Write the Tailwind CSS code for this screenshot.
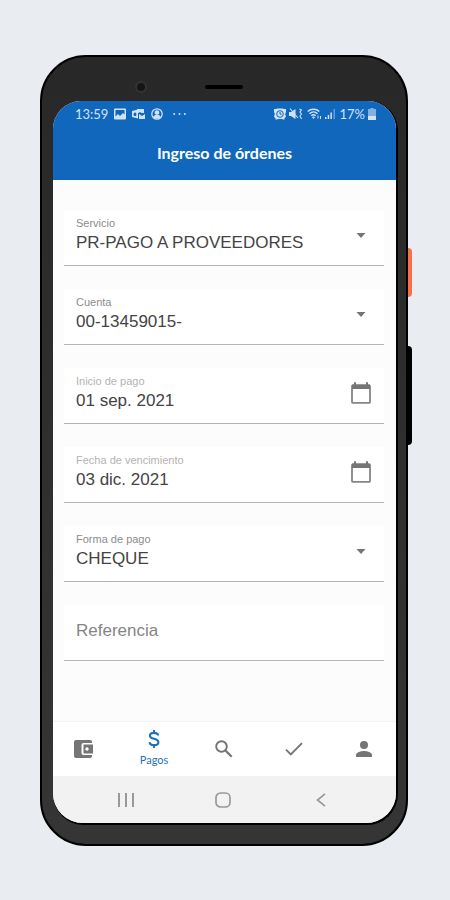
<!DOCTYPE html>
<html lang="es">
<head>
<meta charset="utf-8">
<meta name="viewport" content="width=device-width, initial-scale=1">
<title>Ingreso de órdenes</title>
<script src="https://cdn.jsdelivr.net/npm/@tailwindcss/browser@4"></script>
</head>
<body class="min-h-screen bg-[#e9edf2] pt-[55px] pr-[42px] pb-[54px] pl-10 font-['Liberation_Sans',Arial,sans-serif]">
<div class="relative mx-auto max-w-md rounded-[46px] border-2 border-black bg-linear-to-b from-[#282828] to-[#353535] pr-2.5 pb-[21px] pl-[11px]">
  <!-- side buttons -->
  <span class="absolute top-[191px] -right-1.5 h-[49px] w-1 rounded-r-sm bg-[#fa6f4b]"></span>
  <span class="absolute top-[289px] -right-1.5 h-[99px] w-1 rounded-r-sm bg-black"></span>
  <!-- camera and speaker -->
  <div class="h-11"></div>
  <span class="absolute top-6 left-[93px] size-3 rounded-full border-2 border-[#333] bg-[#151515]"></span>
  <span class="absolute top-7 left-1/2 h-1 w-[38px] -translate-x-1/2 rounded-full bg-black"></span>

  <div class="flex flex-col overflow-hidden rounded-t-[28px] rounded-b-[30px] bg-[#fcfcfc] shadow-[1px_1px_0_1px_#000]">
    <header class="bg-[#1067bc] font-[Lato,sans-serif] text-white">
      <div class="flex h-[26px] items-center justify-between pr-5 pl-[22px] text-[13px] leading-4 text-[#cfe3f6]">
        <div class="flex items-center gap-1.5">
          <span>13:59</span>
          <svg class="h-3 w-3" viewBox="0 0 12 12" fill="currentColor"><path fill-rule="evenodd" d="M1 0.500h10a1 1 0 0 1 1 1v9a1 1 0 0 1-1 1H1a1 1 0 0 1-1-1v-9a1 1 0 0 1 1-1zM1.500 2v6.500L4 6l2 2L9 5l1.500 1.500V2z"/></svg>
          <svg class="h-3 w-[13px]" viewBox="0 0 13 12" fill="currentColor"><path d="M5 1h7v4H9.500L8 4 6.500 5H5z"/><path fill-rule="evenodd" d="M0 3l6-1.500v9L0 9zM3 4.500a1.500 1.800 0 1 0 0.010 0z"/><path d="M7 6l3 2 3-2v5H7z"/></svg>
          <svg class="h-3 w-3" viewBox="0 0 12 12" fill="none" stroke="currentColor" stroke-width="1.300"><circle cx="6" cy="6" r="5.200"/><circle cx="6" cy="4.500" r="1.700" fill="currentColor"/><path fill="currentColor" d="M3 8.800c1-2 5-2 6 0-1.500 1.800-4.500 1.800-6 0z"/></svg>
          <svg class="ml-1 h-3 w-[13px]" viewBox="0 0 13 12" fill="currentColor"><circle cx="1.200" cy="6" r="1"/><circle cx="6.500" cy="6" r="1"/><circle cx="11.800" cy="6" r="1"/></svg>
        </div>
        <div class="flex items-center gap-[3px]">
          <svg class="h-3 w-3" viewBox="0 0 12 12"><path fill="currentColor" d="M0 1h2l1.500-.5h5L10 1h2v3l-.8 2L12 9l-1.500 1v1.500H9L8 11H4l-1 .5H1.500V10L0 9l.8-3L0 4z"/><circle cx="6" cy="6" r="3.300" fill="none" stroke="#1067bc"/><path d="M6 4v2.200h1.600" fill="none" stroke="#1067bc"/></svg>
          <svg class="h-3 w-[13px]" viewBox="0 0 13 12" fill="currentColor"><path d="M0 4h2l4.500-3v10L2 8H0z"/><path d="M1 .5l8 9.500M10.500 1l2 1-1.500 2 1.500 2-1.500 2 1.500 3" fill="none" stroke="currentColor" stroke-width="1.100"/></svg>
          <svg class="ml-0.5 h-3 w-[15px]" viewBox="0 0 15 12" fill="none" stroke="currentColor" stroke-width="1.500"><path d="M.7 3.500c3-3 8.600-3 11.600 0M2.500 5.700c2.300-2.200 5.700-2.200 8 0M4.300 7.800c1.300-1.200 3.100-1.200 4.400 0"/><path d="M5.500 9h2l-1 1.500zM11 7.500v3M13.500 8v3" stroke-width="1"/></svg>
          <svg class="h-3 w-3" viewBox="0 0 12 12" fill="currentColor"><path d="M0 9h1.500v2H0zM2.700 7h1.500v4H2.700zM5.400 4.500h1.500V11H5.400z"/><path opacity=".45" d="M8.500 1H10v10H8.500z"/></svg>
          <span>17%</span>
          <svg class="h-3 w-2" viewBox="0 0 8 12" fill="currentColor"><path opacity=".6" d="M2.500 0h3v1H8v7H0V1h2.500z"/><path d="M0 8h8v4H0z"/></svg>
        </div>
      </div>
      <h1 class="pt-4 pb-[17px] text-center text-base leading-5 font-bold">Ingreso de órdenes</h1>
    </header>

    <form class="flex flex-col gap-[23px] pt-[30px] pr-3 pb-[60px] pl-[11px] text-[#444]">
      <div class="flex h-14 items-center justify-between border-b border-[#b5b5b5] bg-white pr-[18px] pl-3">
        <div class="flex min-w-0 flex-1 flex-col pb-1.5">
          <label for="servicio" class="text-[11px] leading-4 text-[#8c8c8c]">Servicio</label>
          <select id="servicio" class="h-6 w-full appearance-none bg-transparent text-[17px] leading-6 outline-none"><option>PR-PAGO A PROVEEDORES</option></select>
        </div>
        <svg class="pointer-events-none mb-1 h-[5px] w-2.5" viewBox="0 0 10 5" fill="#757575"><path d="M.5 0h9L5 5z"/></svg>
      </div>
      <div class="flex h-14 items-center justify-between border-b border-[#b5b5b5] bg-white pr-[18px] pl-3">
        <div class="flex min-w-0 flex-1 flex-col pb-1.5">
          <label for="cuenta" class="text-[11px] leading-4 text-[#8c8c8c]">Cuenta</label>
          <select id="cuenta" class="h-6 w-full appearance-none bg-transparent text-[17px] leading-6 outline-none"><option>00-13459015-</option></select>
        </div>
        <svg class="pointer-events-none mb-1 h-[5px] w-2.5" viewBox="0 0 10 5" fill="#757575"><path d="M.5 0h9L5 5z"/></svg>
      </div>
      <div class="flex h-14 items-center justify-between border-b border-[#b5b5b5] bg-white pr-[13px] pl-3">
        <div class="flex min-w-0 flex-1 flex-col pb-1.5">
          <label for="inicio" class="text-[11px] leading-4 text-[#b3b3b3]">Inicio de pago</label>
          <input id="inicio" type="text" value="01 sep. 2021" class="h-6 w-full bg-transparent text-[17px] leading-6 outline-none">
        </div>
        <button type="button" aria-label="Elegir inicio de pago" class="mb-1.5"><svg class="h-[22px] w-5" viewBox="0 0 20 22"><path d="M1.800 3.500h16.400a.8.8 0 0 1 .8.800v15.600a1 1 0 0 1-1 1H2a1 1 0 0 1-1-1V4.300a.8.8 0 0 1 .8-.8z" fill="none" stroke="#858585" stroke-width="1.800"/><path d="M1 2.500h2V.3h2v2.200h10V.3h2v2.200h2V7H1z" fill="#757575"/></svg></button>
      </div>
      <div class="flex h-14 items-center justify-between border-b border-[#b5b5b5] bg-white pr-[13px] pl-3">
        <div class="flex min-w-0 flex-1 flex-col pb-1.5">
          <label for="vencimiento" class="text-[11px] leading-4 text-[#b3b3b3]">Fecha de vencimiento</label>
          <input id="vencimiento" type="text" value="03 dic. 2021" class="h-6 w-full bg-transparent text-[17px] leading-6 outline-none">
        </div>
        <button type="button" aria-label="Elegir fecha de vencimiento" class="mb-1.5"><svg class="h-[22px] w-5" viewBox="0 0 20 22"><path d="M1.800 3.500h16.400a.8.8 0 0 1 .8.800v15.600a1 1 0 0 1-1 1H2a1 1 0 0 1-1-1V4.300a.8.8 0 0 1 .8-.8z" fill="none" stroke="#858585" stroke-width="1.800"/><path d="M1 2.500h2V.3h2v2.200h10V.3h2v2.200h2V7H1z" fill="#757575"/></svg></button>
      </div>
      <div class="flex h-14 items-center justify-between border-b border-[#b5b5b5] bg-white pr-[18px] pl-3">
        <div class="flex min-w-0 flex-1 flex-col pb-1.5">
          <label for="forma" class="text-[11px] leading-4 text-[#8c8c8c]">Forma de pago</label>
          <select id="forma" class="h-6 w-full appearance-none bg-transparent text-[17px] leading-6 outline-none"><option>CHEQUE</option></select>
        </div>
        <svg class="pointer-events-none mb-1 h-[5px] w-2.5" viewBox="0 0 10 5" fill="#757575"><path d="M.5 0h9L5 5z"/></svg>
      </div>
      <div class="flex h-14 items-center border-b border-[#b5b5b5] bg-white px-3">
        <input type="text" aria-label="Referencia" placeholder="Referencia" class="w-full bg-transparent pb-1 text-[17px] leading-6 outline-none placeholder:text-[#858585]">
      </div>
    </form>

    <nav class="flex h-[55px] items-center justify-between border-t border-[#f3f3f3] bg-white pr-1 pl-[3px] text-[#757575]">
      <a href="#" aria-label="Cuentas" class="flex w-14 justify-center"><svg class="h-[18px] w-5" viewBox="0 0 20 18"><path fill="currentColor" fill-rule="evenodd" d="M2 0h14a2 2 0 0 1 2 2v1H9.500a2 2 0 0 0-2 2v8a2 2 0 0 0 2 2H18v1a2 2 0 0 1-2 2H2a2 2 0 0 1-2-2V2a2 2 0 0 1 2-2zM9.500 4.500H19V13.500H9.500zM13 7.300a1.700 1.700 0 1 0 .010 0z"/></svg></a>
      <a href="#" aria-current="page" class="flex w-14 flex-col items-center gap-1 text-[#1c72bd]">
        <svg class="h-[18px] w-3" viewBox="0 0 12 18" fill="none" stroke="currentColor" stroke-width="2.100"><path d="M10.200 5.500C10 3.700 8.300 2.900 6 2.900c-2.600 0-4.100 1.100-4.100 2.800 0 4 8.500 2.300 8.500 6.500 0 1.900-1.800 2.900-4.300 2.900-2.600 0-4.400-1.100-4.500-3M6 0v3M6 15v3"/></svg>
        <span class="font-[Lato,sans-serif] text-[11px] leading-4">Pagos</span>
      </a>
      <a href="#" aria-label="Buscar" class="flex w-14 justify-center"><svg class="size-[18px]" viewBox="0 0 18 18" fill="none" stroke="currentColor"><circle cx="6.500" cy="6.500" r="5.300" stroke-width="1.900"/><path d="M10.700 10.700l6 6" stroke-width="2.300"/></svg></a>
      <a href="#" aria-label="Aprobar" class="flex w-14 justify-center"><svg class="h-[14px] w-[18px]" viewBox="0 0 18 14" fill="none" stroke="currentColor" stroke-width="1.900"><path d="M1 7.600l4.800 4.800L17 1.200"/></svg></a>
      <a href="#" aria-label="Perfil" class="flex w-14 justify-center"><svg class="size-4" viewBox="0 0 16 16" fill="currentColor"><circle cx="8" cy="4" r="4"/><path d="M0 16v-2c0-2.700 5.300-4 8-4s8 1.300 8 4v2z"/></svg></a>
    </nav>
    <div class="grid h-[47px] grid-cols-3 place-items-center bg-[#f2f2f2] pr-[26px] pl-6 text-[#999]">
      <button type="button" aria-label="Recientes"><svg class="h-[14px] w-4" viewBox="0 0 16 14" fill="none" stroke="currentColor" stroke-width="2"><path d="M1 0v14M8 0v14M15 0v14"/></svg></button>
      <button type="button" aria-label="Inicio"><svg class="size-4" viewBox="0 0 16 16" fill="none" stroke="currentColor" stroke-width="1.700"><rect x="1" y="1" width="14" height="14" rx="4.500"/></svg></button>
      <button type="button" aria-label="Atrás"><svg class="h-[14px] w-2.5" viewBox="0 0 10 14" fill="none" stroke="currentColor" stroke-width="1.700"><path d="M9 .8L1.500 7 9 13.200"/></svg></button>
    </div>
  </div>
</div>
</body>
</html>
